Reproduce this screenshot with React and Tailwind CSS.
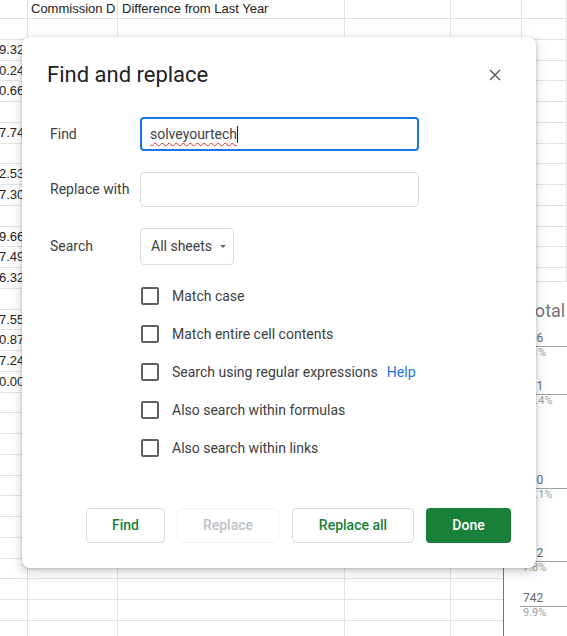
import React from 'react';

const cellCols = ['w-[28px]', 'w-[90px]', 'w-[227px]', 'w-[106px]', 'w-[71px]', 'flex-1'];

// left column values, visible only partly behind the dialog
const leftValues = {
  2: '9.32', 3: '0.24', 4: '0.66', 6: '7.74', 8: '2.53', 9: '7.30',
  11: '9.66', 12: '7.49', 13: '6.32', 15: '7.55', 16: '0.87', 17: '7.24', 18: '0.00',
};

const chartItems = [
  { value: '836', pct: '5.1%', mt: 'mt-[9px]' },
  { value: '611', pct: '14.4%', mt: 'mt-[20px]' },
  { value: '480', pct: '12.1%', mt: 'mt-[66px]' },
  { value: '312', pct: '7.8%', mt: 'mt-[45px]' },
  { value: '742', pct: '9.9%', mt: 'mt-[17px]' },
];

const options = [
  'Match case',
  'Match entire cell contents',
  'Search using regular expressions',
  'Also search within formulas',
  'Also search within links',
];

const Sheet = () => {
  const rows = Array.from({ length: 30 }, (_, i) => i + 1);
  return (
    <div className="font-['Liberation_Sans',Arial,sans-serif] text-[13px] text-[#222]">
      <div className="flex h-[19px]">
        {cellCols.map((w, c) => (
          <div key={c} className={`${w} shrink-0 border-r border-b border-[#e2e2e2] flex items-center overflow-hidden whitespace-nowrap`}>
            {c === 1 && <span className="pl-[3px]">Commission D</span>}
            {c === 2 && <span className="pl-[4px]">Difference from Last Year</span>}
          </div>
        ))}
      </div>
      {rows.map((r) => (
        <div key={r} className="flex h-[20.75px]">
          {cellCols.map((w, c) => (
            <div key={c} className={`${w} shrink-0 border-r border-b border-[#e2e2e2] flex items-center whitespace-nowrap`}>
              {c === 0 && leftValues[r] && <span className="-ml-[1px]">{leftValues[r]}</span>}
            </div>
          ))}
        </div>
      ))}
    </div>
  );
};

const Chart = () => (
  <div className="absolute left-[503px] top-[281px] right-0 bottom-0 bg-white border-l border-t border-l-[#757575] border-t-[#e0e0e0] font-['Roboto',sans-serif] overflow-hidden">
    <div className="mt-[18px] pl-[21px] h-[22px] leading-[22px] text-[18px] text-[#757575] whitespace-nowrap">Total</div>
    {chartItems.map((item, i) => (
      <div key={i} className={`${item.mt} pl-[16px]`}>
        <div className="pl-[3px] h-[14px] leading-[14px] text-[12px] text-[#666]">{item.value}</div>
        <div className="mt-[1px] h-px bg-[#9e9e9e]" />
        <div className="pl-[3px] h-[12px] leading-[12px] text-[11px] text-[#9aa0a6]">{item.pct}</div>
      </div>
    ))}
  </div>
);

const Checkbox = ({ label, help }) => (
  <div className="flex items-center h-[38px]">
    <div className="ml-[1px] w-[18px] h-[18px] border-2 border-[#5f6368] rounded-[2px] shrink-0" />
    <span className="ml-[13px] text-[14px] text-[#3c4043]">{label}</span>
    {help && <span className="ml-[9px] text-[14px] text-[#1a73e8]">Help</span>}
  </div>
);

const Dialog = () => (
  <div className="absolute left-[22px] top-[37px] w-[514px] h-[531px] bg-white rounded-[8px] shadow-[0_4px_8px_3px_rgba(60,64,67,0.15),0_1px_3px_rgba(60,64,67,0.3)] flex flex-col pl-[26px] pr-[25px] pt-[24px] pb-[25px] font-['Roboto',sans-serif]">
    {/* Header */}
    <div className="flex items-center justify-between h-[28px]">
      <h1 className="-ml-[1px] text-[22px] text-[#202124] leading-[28px]">Find and replace</h1>
      <button className="w-6 h-6 mr-[4px] flex items-center justify-center">
        <svg width="12" height="12" viewBox="0 0 12 12">
          <path d="M1 1L11 11M11 1L1 11" stroke="#5f6368" strokeWidth="1.5" />
        </svg>
      </button>
    </div>

    {/* Find */}
    <div className="flex items-center mt-[28px]">
      <label className="w-[92px] pl-[2px] shrink-0 text-[14px] text-[#3c4043]">Find</label>
      <div className="w-[279px] h-[34px] border-2 border-[#1a73e8] rounded-[4px] flex items-center pl-[8px] text-[14px] text-[#3c4043]">
        <span className="underline decoration-wavy decoration-[#d93025] decoration-1 underline-offset-[3px]">solveyourtech</span>
        <span className="w-px h-[17px] bg-[#202124]" />
      </div>
    </div>

    {/* Replace with */}
    <div className="flex items-center mt-[21px]">
      <label className="w-[92px] pl-[2px] shrink-0 text-[14px] text-[#3c4043]">Replace with</label>
      <div className="w-[279px] h-[35px] border border-[#dadce0] rounded-[4px]" />
    </div>

    {/* Search */}
    <div className="flex items-center mt-[21px]">
      <label className="w-[92px] pl-[2px] shrink-0 text-[14px] text-[#3c4043]">Search</label>
      <div className="w-[94px] h-[37px] border border-[#dadce0] rounded-[4px] flex items-center pl-[10px] text-[14px] text-[#3c4043]">
        <span>All sheets</span>
        <svg className="ml-[8px]" width="6" height="3" viewBox="0 0 6 3">
          <path d="M0 0H6L3 3Z" fill="#5f6368" />
        </svg>
      </div>
    </div>

    {/* Options */}
    <div className="mt-[12px] pl-[92px]">
      {options.map((o, i) => (
        <Checkbox key={o} label={o} help={i === 2} />
      ))}
    </div>

    {/* Buttons */}
    <div className="mt-auto flex justify-end text-[14px] font-medium">
      <button className="w-[79px] h-[35px] border border-[#dadce0] rounded-[4px] text-[#188038]">Find</button>
      <button className="ml-[12px] w-[102px] h-[35px] border border-[#f1f3f4] rounded-[4px] text-[#bdc1c6]">Replace</button>
      <button className="ml-[13px] w-[122px] h-[35px] border border-[#dadce0] rounded-[4px] text-[#188038]">Replace all</button>
      <button className="ml-[12px] w-[85px] h-[35px] rounded-[4px] bg-[#188038] text-white">Done</button>
    </div>
  </div>
);

const App = () => {
  return (
    <div className="relative w-[567px] h-[636px] overflow-hidden bg-white">
      <Sheet />
      <Chart />
      <Dialog />
    </div>
  );
};

export default App;
